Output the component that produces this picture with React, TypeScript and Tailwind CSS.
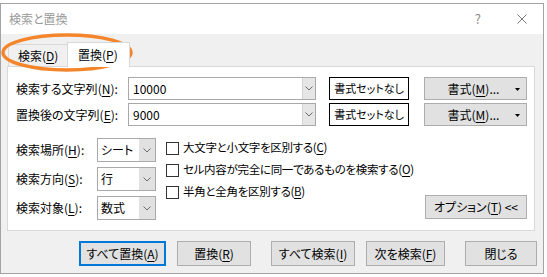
import React from "react";

const font = "font-['Noto_Sans_CJK_JP','Noto_Sans',sans-serif] [font-feature-settings:'palt']";

function Key({ k }: { k: string }) {
  return <span className="underline underline-offset-[2px] decoration-1">{k}</span>;
}

function Chevron() {
  return (
    <svg width="8" height="5" viewBox="0 0 8 5" fill="none">
      <path d="M0.5 0.5 L4 4 L7.5 0.5" stroke="#6b6b6b" strokeWidth="1" />
    </svg>
  );
}

function ComboInput({ value }: { value: string }) {
  return (
    <div className="flex h-full w-[188px] border border-[#a9a9a9] bg-white">
      <div className="flex flex-1 items-center pl-[4px] text-[12px] text-black">{value}</div>
      <div className="flex w-[13px] items-center justify-center border-l border-[#d4d4d4] bg-[#e6e6e6]">
        <Chevron />
      </div>
    </div>
  );
}

function FormatRow({ label, k, value, top }: { label: string; k: string; value: string; top?: boolean }) {
  return (
    <div className={`flex h-[23px] items-stretch ${top ? "" : "mt-[3px]"}`}>
      <div className="flex w-[112px] items-center whitespace-nowrap text-[12px]">
        {label}(<Key k={k} />):
      </div>
      <ComboInput value={value} />
      <div className="ml-[13px] flex w-[80px] items-center justify-center whitespace-nowrap border border-black bg-white text-[11px]">
        書式セットなし
      </div>
      <div className="relative ml-[15px] flex w-[103px] items-center justify-center border border-[#adadad] bg-[#e1e1e1] text-[12px]">
        <span className="mr-[4px]">書式(<Key k="M" />)...</span>
        <svg className="absolute right-[6px] top-[10px]" width="5" height="3" viewBox="0 0 5 3">
          <path d="M0 0 H5 L2.5 3 Z" fill="#000" />
        </svg>
      </div>
    </div>
  );
}

function SelectRow({ label, k, value }: { label: string; k: string; value: string }) {
  return (
    <div className="flex h-[24px] items-stretch">
      <div className="flex w-[81px] items-center whitespace-nowrap text-[12px]">
        {label}(<Key k={k} />):
      </div>
      <div className="flex w-[59px] border border-[#a9a9a9] bg-white">
        <div className="flex flex-1 items-center pl-[3px] text-[12px]">{value}</div>
        <div className="flex w-[16px] items-center justify-center bg-[#e1e1e1]">
          <Chevron />
        </div>
      </div>
    </div>
  );
}

function Check({ children }: { children: React.ReactNode }) {
  return (
    <div className="flex h-[22px] items-center whitespace-nowrap">
      <div className="h-[13px] w-[13px] shrink-0 border border-[#333] bg-white" />
      <span className="ml-[4px] text-[11.5px] tracking-[-0.3px]">{children}</span>
    </div>
  );
}

function Btn({ children, w, className = "", primary }: { children: React.ReactNode; w: string; className?: string; primary?: boolean }) {
  return (
    <div
      className={`flex h-[25px] items-center justify-center whitespace-nowrap bg-[#e1e1e1] text-[12px] ${w} ${
        primary ? "border-2 border-[#0078d7]" : "border border-[#adadad]"
      } ${className}`}
    >
      {children}
    </div>
  );
}

export default function App() {
  return (
    <div className={`relative h-[277px] w-[547px] overflow-hidden bg-white text-black ${font}`}>
      <div className="mt-[3px] flex h-[271px] w-[544px] flex-col border border-[#a3a3a3] bg-[#f0f0f0]">
        {/* title bar */}
        <div className="flex h-[30px] items-center bg-white pl-[8px] text-[12px] text-[#9a9a9a]">
          <span>検索と置換</span>
          <span className="ml-auto mr-[36px] text-[13px] text-[#8a8a8a]">?</span>
          <svg className="mr-[16px]" width="10" height="10" viewBox="0 0 10 10">
            <path d="M0.5 0.5 L9.5 9.5 M9.5 0.5 L0.5 9.5" stroke="#7a7a7a" strokeWidth="1" />
          </svg>
        </div>

        <div className="px-[6px] pt-[8px]">
          {/* tabs */}
          <div className="flex h-[24px] items-end">
            <div className="ml-[1px] flex h-[22px] w-[59px] items-center border-l border-t border-[#d9d9d9] bg-[#f0f0f0] pl-[9px] text-[12px]">
              検索(<Key k="D" />)
            </div>
            <div className="relative z-10 -mb-px flex h-[25px] w-[63px] items-center border-x border-t border-[#d9d9d9] bg-white pl-[10px] text-[12px]">
              置換(<Key k="P" />)
            </div>
          </div>

          {/* panel */}
          <div className="h-[165px] w-[528px] border border-[#d9d9d9] bg-white pl-[8px] pt-[10px]">
            <FormatRow label="検索する文字列" k="N" value="10000" top />
            <FormatRow label="置換後の文字列" k="E" value="9000" />

            <div className="mt-[12px] flex">
              <div className="flex flex-col gap-[5px]">
                <SelectRow label="検索場所" k="H" value="シート" />
                <SelectRow label="検索方向" k="S" value="行" />
                <SelectRow label="検索対象" k="L" value="数式" />
              </div>
              <div className="-mt-[1px] ml-[10px] flex flex-col">
                <Check>
                  大文字と小文字を区別する(<Key k="C" />)
                </Check>
                <Check>
                  セル内容が完全に同一であるものを検索する(<Key k="O" />)
                </Check>
                <Check>
                  半角と全角を区別する(<Key k="B" />)
                </Check>
              </div>
              <div className="mb-[1px] ml-auto mr-[7px] flex h-[24px] w-[102px] shrink-0 items-center justify-center self-end whitespace-nowrap border border-[#adadad] bg-[#e1e1e1] text-[12px]">
                オプション(<Key k="T" />)&nbsp;&lt;&lt;
              </div>
            </div>
          </div>

          {/* buttons */}
          <div className="mt-[10px] flex">
            <Btn w="w-[87px]" className="ml-[72px]" primary>
              すべて置換(<Key k="A" />)
            </Btn>
            <Btn w="w-[74px]" className="ml-[11px]">
              置換(<Key k="R" />)
            </Btn>
            <Btn w="w-[84px]" className="ml-[20px]">
              すべて検索(<Key k="I" />)
            </Btn>
            <Btn w="w-[79px]" className="ml-[11px]">
              次を検索(<Key k="F" />)
            </Btn>
            <Btn w="w-[72px]" className="ml-[20px]">
              閉じる
            </Btn>
          </div>
        </div>
      </div>

      {/* annotation */}
      <svg className="pointer-events-none absolute left-0 top-0" width="547" height="277">
        <ellipse cx="67" cy="52.5" rx="64" ry="17.5" fill="none" stroke="#f5852b" strokeWidth="3.5" />
      </svg>
    </div>
  );
}
